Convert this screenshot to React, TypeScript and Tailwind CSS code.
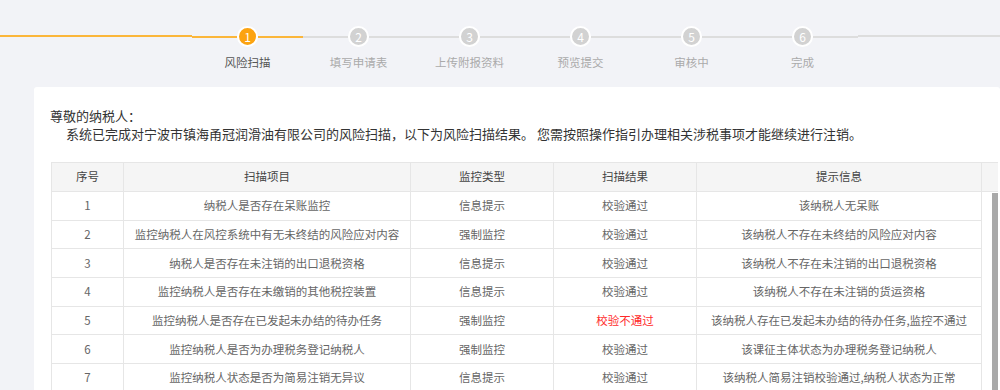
const steps = ["风险扫描", "填写申请表", "上传附报资料", "预览提交", "审核中", "完成"];

type Row = {
  item: string;
  type: string;
  result: string;
  info: string;
  failed?: boolean;
};

const rows: Row[] = [
  { item: "纳税人是否存在呆账监控", type: "信息提示", result: "校验通过", info: "该纳税人无呆账" },
  { item: "监控纳税人在风控系统中有无未终结的风险应对内容", type: "强制监控", result: "校验通过", info: "该纳税人不存在未终结的风险应对内容" },
  { item: "纳税人是否存在未注销的出口退税资格", type: "信息提示", result: "校验通过", info: "该纳税人不存在未注销的出口退税资格" },
  { item: "监控纳税人是否存在未缴销的其他税控装置", type: "信息提示", result: "校验通过", info: "该纳税人不存在未注销的货运资格" },
  { item: "监控纳税人是否存在已发起未办结的待办任务", type: "强制监控", result: "校验不通过", info: "该纳税人存在已发起未办结的待办任务,监控不通过", failed: true },
  { item: "监控纳税人是否为办理税务登记纳税人", type: "强制监控", result: "校验通过", info: "该课征主体状态为办理税务登记纳税人" },
  { item: "监控纳税人状态是否为简易注销无异议", type: "信息提示", result: "校验通过", info: "该纳税人简易注销校验通过,纳税人状态为正常" },
];

const font = { fontFamily: '"Noto Sans CJK SC", "Noto Sans", sans-serif' };

function Stepper() {
  return (
    <div className="flex h-[87px] pt-[26px]">
      <div className="w-[192px] pt-[9px]">
        <div className="h-[2px] bg-[#fbb63a]" />
      </div>
      {steps.map((label, i) => {
        const active = i === 0;
        return (
          <div key={label} className="flex w-[111px] flex-col items-center">
            <div className="flex w-full items-center">
              <div className={`h-[2px] flex-1 ${active ? "bg-[#fbb63a]" : "bg-[#dddddd]"}`} />
              <div
                className={`flex h-[21px] w-[21px] items-center justify-center rounded-full border-2 border-white text-[12px] leading-none text-white ${
                  active ? "bg-[#fca311]" : "bg-[#d2d2d2]"
                }`}
              >
                {i + 1}
              </div>
              <div className={`h-[2px] flex-1 ${active ? "bg-[#fbb63a]" : "bg-[#dddddd]"}`} />
            </div>
            <div className={`mt-[7px] text-[11.5px] leading-[16px] ${active ? "text-[#555]" : "text-[#aaa]"}`}>{label}</div>
          </div>
        );
      })}
      <div className="flex-1 pt-[9px]">
        <div className="h-[2px] bg-[#dddddd]" />
      </div>
    </div>
  );
}

function ResultTable() {
  const cell = "flex items-center justify-center border-r border-[#e6e6e6] text-center";
  return (
    <div className="ml-px w-[947px] border-l border-t border-[#e6e6e6] text-[11.5px]">
      <div className="grid h-[29px] grid-cols-[72px_287px_143px_143px_285px_17px] border-b border-[#e6e6e6] bg-[#f5f5f5] text-[#444]">
        <div className={cell}>序号</div>
        <div className={cell}>扫描项目</div>
        <div className={cell}>监控类型</div>
        <div className={cell}>扫描结果</div>
        <div className={cell}>提示信息</div>
        <div />
      </div>
      <div className="flex">
        <div className="w-[930px]">
          {rows.map((r, i) => (
            <div
              key={i}
              className="grid h-[28.7px] grid-cols-[72px_287px_143px_143px_285px] border-b border-[#e6e6e6] text-[#666]"
            >
              <div className={cell}>{i + 1}</div>
              <div className={cell}>{r.item}</div>
              <div className={cell}>{r.type}</div>
              <div className={`${cell} ${r.failed ? "text-[#ff2a2a]" : ""}`}>{r.result}</div>
              <div className={cell}>{r.info}</div>
            </div>
          ))}
        </div>
        <div className="w-[17px] pl-[10px] pt-px">
          <div className="h-[240px] w-[6px] bg-[#a9a9a9]" />
        </div>
      </div>
    </div>
  );
}

export default function App() {
  return (
    <div className="h-[390px] overflow-hidden bg-[#f2f3f7]" style={font}>
      <Stepper />
      <div className="ml-[34px] rounded-[3px] bg-white pl-[16px] pt-[20px]">
        <p className="text-[13px] leading-[18px] text-[#333]">尊敬的纳税人：</p>
        <p className="pl-[16px] text-[13px] leading-[18px] text-[#333]">
          系统已完成对宁波市镇海甬冠润滑油有限公司的风险扫描，以下为风险扫描结果。 您需按照操作指引办理相关涉税事项才能继续进行注销。
        </p>
        <div className="mt-[19px]">
          <ResultTable />
        </div>
      </div>
    </div>
  );
}
